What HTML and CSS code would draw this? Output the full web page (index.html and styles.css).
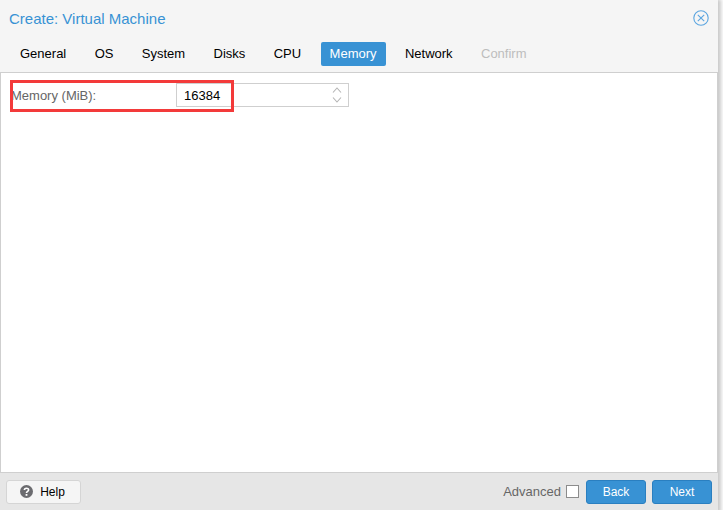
FILE: index.html
```html
<!DOCTYPE html>
<html lang="en">
  <head>
    <meta charset="UTF-8" />
    <title>Create: Virtual Machine</title>
    <link rel="stylesheet" href="styles.css">
  </head>
  <body>
    <div class="window">
      <div class="header">
        <div class="title">Create: Virtual Machine</div>
        <svg class="close" width="16" height="16" viewBox="0 0 16 16">
          <circle cx="8" cy="8" r="7.2" fill="none" stroke="#5aa5e0" stroke-width="1.1" />
          <path d="M4.8 4.8 L11.2 11.2 M11.2 4.8 L4.8 11.2" stroke="#5aa5e0" stroke-width="1.1" />
        </svg>
      </div>
      <div class="tabs">
        <div class="tab">General</div>
        <div class="tab">OS</div>
        <div class="tab">System</div>
        <div class="tab">Disks</div>
        <div class="tab">CPU</div>
        <div class="tab active">Memory</div>
        <div class="tab">Network</div>
        <div class="tab disabled">Confirm</div>
      </div>
      <div class="content">
        <div class="field">
          <label class="field-label">Memory (MiB):</label>
          <div class="spinner">
            <span class="spinner-value">16384</span>
            <svg class="spinner-arrows" width="10" height="16" viewBox="0 0 10 16">
              <path d="M1 5.5 L5 1 L9 5.5 M1 10.5 L5 15 L9 10.5" fill="none" stroke="#b4b4b4" stroke-width="1.1" />
            </svg>
          </div>
        </div>
        <div class="highlight"></div>
      </div>
      <div class="footer">
        <button class="btn help-btn">
          <svg width="13" height="13" viewBox="0 0 13 13">
            <circle cx="6.5" cy="6.5" r="6.5" fill="#6b6b6f" />
            <path d="M4.4 5 C4.4 2.6 8.6 2.6 8.6 4.9 C8.6 6.4 6.5 6.3 6.5 7.9" fill="none" stroke="#fff" stroke-width="1.6" />
            <rect x="5.6" y="9" width="1.8" height="1.8" fill="#fff" />
          </svg>
          Help
        </button>
        <div class="footer-right">
          <span class="advanced">Advanced</span>
          <span class="checkbox"></span>
          <button class="btn primary back-btn">Back</button>
          <button class="btn primary">Next</button>
        </div>
      </div>
    </div>
  </body>
</html>
```

FILE: styles.css
```css
body {
  margin: 0;
  background-color: #fff;
  font-family: "Liberation Sans", Arial, sans-serif;
  font-size: 13px;
}
.window {
  width: 718px;
  height: 510px;
  display: flex;
  flex-direction: column;
  background-color: #f5f5f5;
  box-shadow: 1px 1px 4px 2px #c8c8c8;
}
.header {
  height: 41px;
  flex: none;
  display: flex;
  align-items: center;
  justify-content: space-between;
  padding: 0 9px 5px 9px;
  box-sizing: border-box;
}
.title {
  font-size: 15px;
  color: #3892d4;
}
.tabs {
  height: 31px;
  flex: none;
  display: flex;
  gap: 10.4px;
  padding: 1px 0 0 11px;
  box-sizing: border-box;
}
.tab {
  height: 24px;
  line-height: 24px;
  padding: 0 9px;
  color: #000;
  border-radius: 2px;
}
.tab.active {
  background-color: #3892d4;
  color: #fff;
}
.tab.disabled {
  color: #bdbdbd;
}
.content {
  position: relative;
  flex: 1;
  background-color: #fff;
  border: 1px solid #cfcfcf;
  border-bottom: 0;
  padding: 10px;
}
.field {
  display: flex;
  align-items: center;
  height: 24px;
}
.field-label {
  width: 165px;
  color: #666;
}
.spinner {
  width: 173px;
  height: 24px;
  box-sizing: border-box;
  border: 1px solid #cfcfcf;
  display: flex;
  align-items: center;
  justify-content: space-between;
  padding: 0 6px 0 7px;
}
.spinner-value {
  color: #000;
}
.highlight {
  position: absolute;
  left: 9px;
  top: 7px;
  width: 218px;
  height: 26px;
  border: 3px solid #f33a3a;
}
.footer {
  height: 38px;
  flex: none;
  display: flex;
  align-items: center;
  justify-content: space-between;
  box-sizing: border-box;
  padding: 0 6px;
  background-color: #e6e6e6;
  border-top: 1px solid #cfcfcf;
}
.footer-right {
  display: flex;
  align-items: center;
}
.btn {
  height: 24px;
  box-sizing: border-box;
  font-family: "Liberation Sans", Arial, sans-serif;
  font-size: 12px;
  border-radius: 3px;
  padding: 0;
  cursor: pointer;
}
.help-btn {
  width: 75px;
  display: flex;
  align-items: center;
  justify-content: center;
  gap: 7px;
  padding-right: 2px;
  background-color: #f5f5f5;
  border: 1px solid #d5d5d5;
  color: #000;
}
.primary {
  width: 60px;
  background-color: #3892d4;
  border: 1px solid #2a7fc0;
  color: #fff;
}
.back-btn {
  margin-right: 6px;
}
.advanced {
  color: #666;
}
.checkbox {
  width: 11px;
  height: 11px;
  margin: 0 7px 0 5px;
  background-color: #fff;
  border: 1px solid #8c8c8c;
}
```
